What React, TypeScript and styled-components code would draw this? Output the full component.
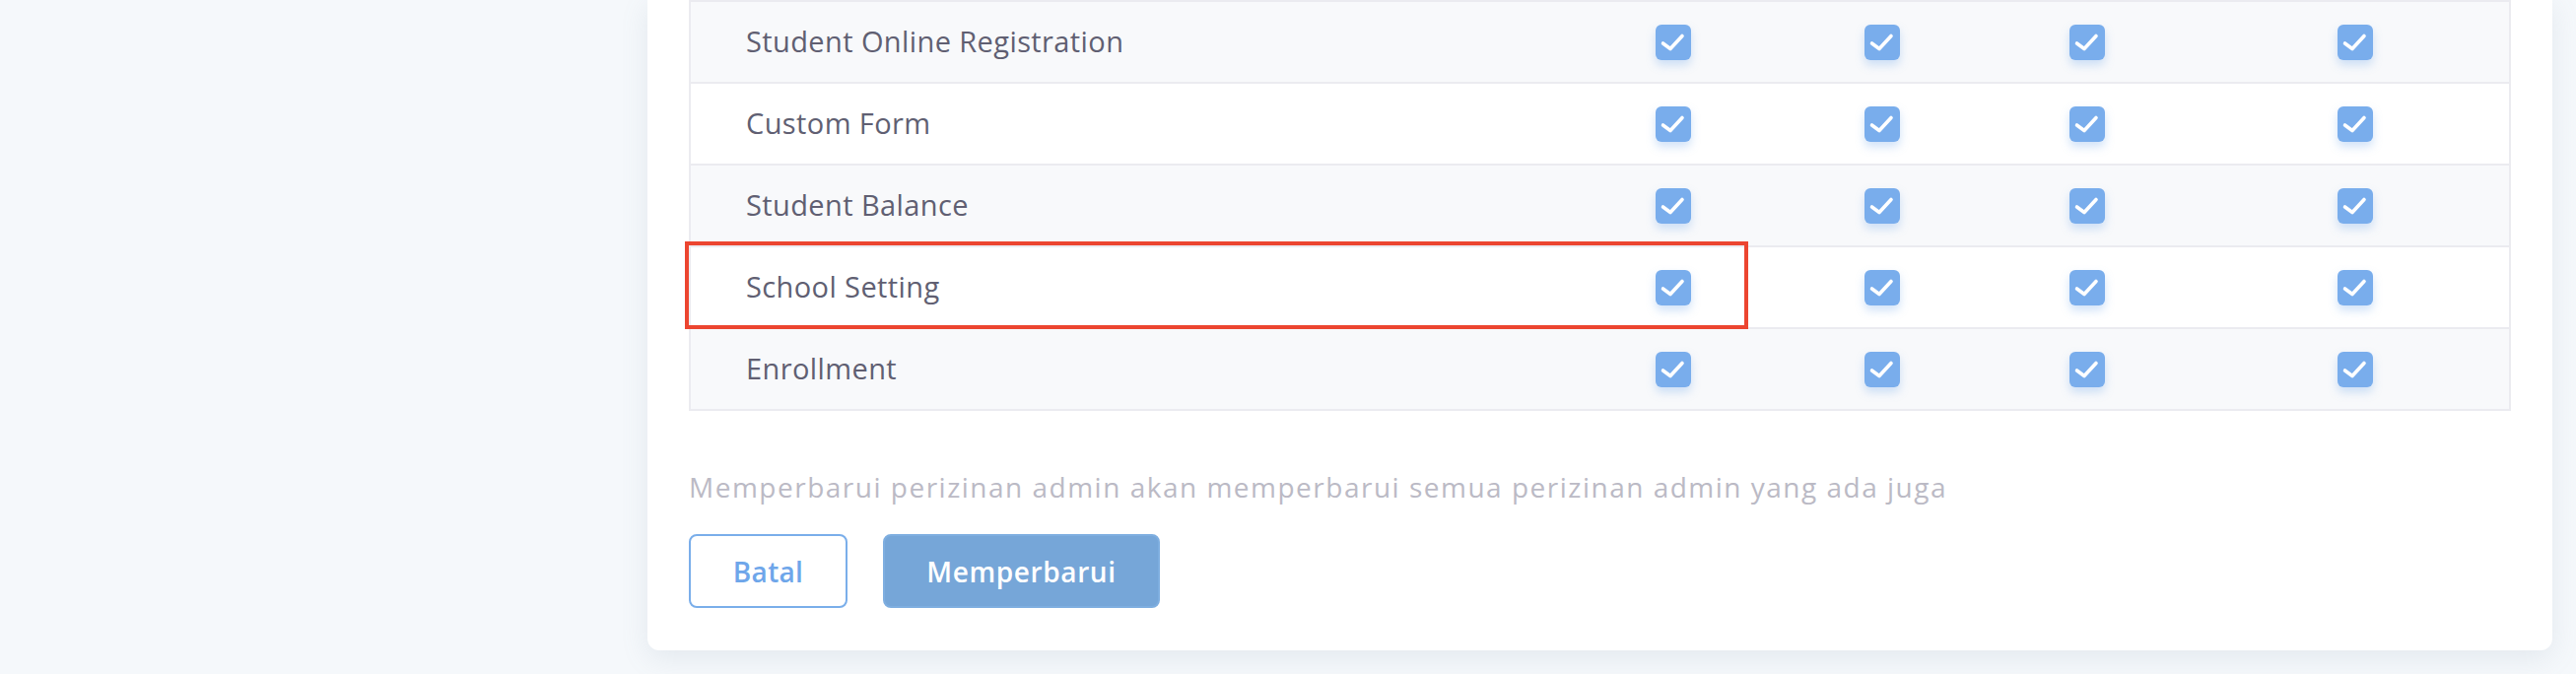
import React from 'react'
import styled, { createGlobalStyle } from 'styled-components'

const GlobalStyle = createGlobalStyle`
  html, body {
    margin: 0;
    padding: 0;
    background: #f5f8fb;
    font-family: 'Open Sans', 'Noto Sans', sans-serif;
  }
`

const Page = styled.div`
  height: 684px;
  overflow: hidden;
  display: flex;
  align-items: flex-end;
  padding: 0 24px 24px 657px;
  box-sizing: border-box;
`

const Card = styled.section`
  width: 1933px;
  box-sizing: border-box;
  background: #ffffff;
  border-radius: 0 0 12px 12px;
  box-shadow: 0 8px 28px rgba(120, 140, 160, 0.14);
  padding: 1px 42px 43px 42px;
  display: flex;
  flex-direction: column;
`

const Table = styled.div`
  border: 2px solid #ebebf0;
  display: flex;
  flex-direction: column;
`

const Row = styled.div<{ striped: boolean; highlight?: boolean }>`
  position: relative;
  display: grid;
  grid-template-columns: 877px 240px 184px 232px 312px;
  height: 81px;
  align-items: center;
  background: ${(p) => (p.striped ? '#f8f9fb' : '#ffffff')};
  border-bottom: 2px solid #ebebf0;

  &:last-child {
    border-bottom: none;
  }

  ${(p) =>
    p.highlight &&
    `
    &::after {
      content: '';
      position: absolute;
      top: -6px;
      left: -6px;
      width: 1079px;
      height: 89px;
      box-sizing: border-box;
      border: 4px solid #ec4530;
      pointer-events: none;
    }
  `}
`

const Label = styled.div`
  padding-left: 56px;
  font-size: 29px;
  letter-spacing: 0.4px;
  color: #605f72;
  margin-top: -2px;
`

const Cell = styled.div`
  display: flex;
  justify-content: center;
`

const Box = styled.span`
  width: 36px;
  height: 36px;
  border-radius: 6px;
  background: #79adec;
  box-shadow: 0 5px 10px rgba(121, 173, 236, 0.35);
  display: flex;
`

const Note = styled.p`
  margin: 57px 0 0;
  font-size: 28px;
  letter-spacing: 1.5px;
  line-height: 40px;
  color: #bbbac5;
`

const Actions = styled.div`
  display: flex;
  gap: 36px;
  margin-top: 28px;
`

const Button = styled.button<{ primary?: boolean }>`
  height: 75px;
  width: ${(p) => (p.primary ? '281px' : '161px')};
  border-radius: 8px;
  box-sizing: border-box;
  font-family: inherit;
  font-size: 28px;
  font-weight: 600;
  letter-spacing: ${(p) => (p.primary ? '0.6px' : '0.3px')};
  cursor: pointer;
  padding: 0;
  border: 2px solid ${(p) => (p.primary ? '#7eaee0' : '#7aaeea')};
  background: ${(p) => (p.primary ? '#76a6d8' : '#ffffff')};
  color: ${(p) => (p.primary ? '#ffffff' : '#6ea6ea')};
`

const Check = () => (
  <Box>
    <svg width='36' height='36' viewBox='0 0 36 36'>
      <path
        d='M7.5 19 L15 24.5 L27 11.5'
        fill='none'
        stroke='#ffffff'
        strokeWidth='3.6'
        strokeLinecap='round'
        strokeLinejoin='round'
      />
    </svg>
  </Box>
)

const permissions = [
  'Student Online Registration',
  'Custom Form',
  'Student Balance',
  'School Setting',
  'Enrollment',
]

export default function App() {
  return (
    <>
      <GlobalStyle />
      <Page>
        <Card>
          <Table>
            {permissions.map((name, i) => (
              <Row key={name} striped={i % 2 === 0} highlight={name === 'School Setting'}>
                <Label>{name}</Label>
                {[0, 1, 2, 3].map((c) => (
                  <Cell key={c}>
                    <Check />
                  </Cell>
                ))}
              </Row>
            ))}
          </Table>

          <Note>
            Memperbarui perizinan admin akan memperbarui semua perizinan admin yang ada juga
          </Note>

          <Actions>
            <Button>Batal</Button>
            <Button primary>Memperbarui</Button>
          </Actions>
        </Card>
      </Page>
    </>
  )
}
